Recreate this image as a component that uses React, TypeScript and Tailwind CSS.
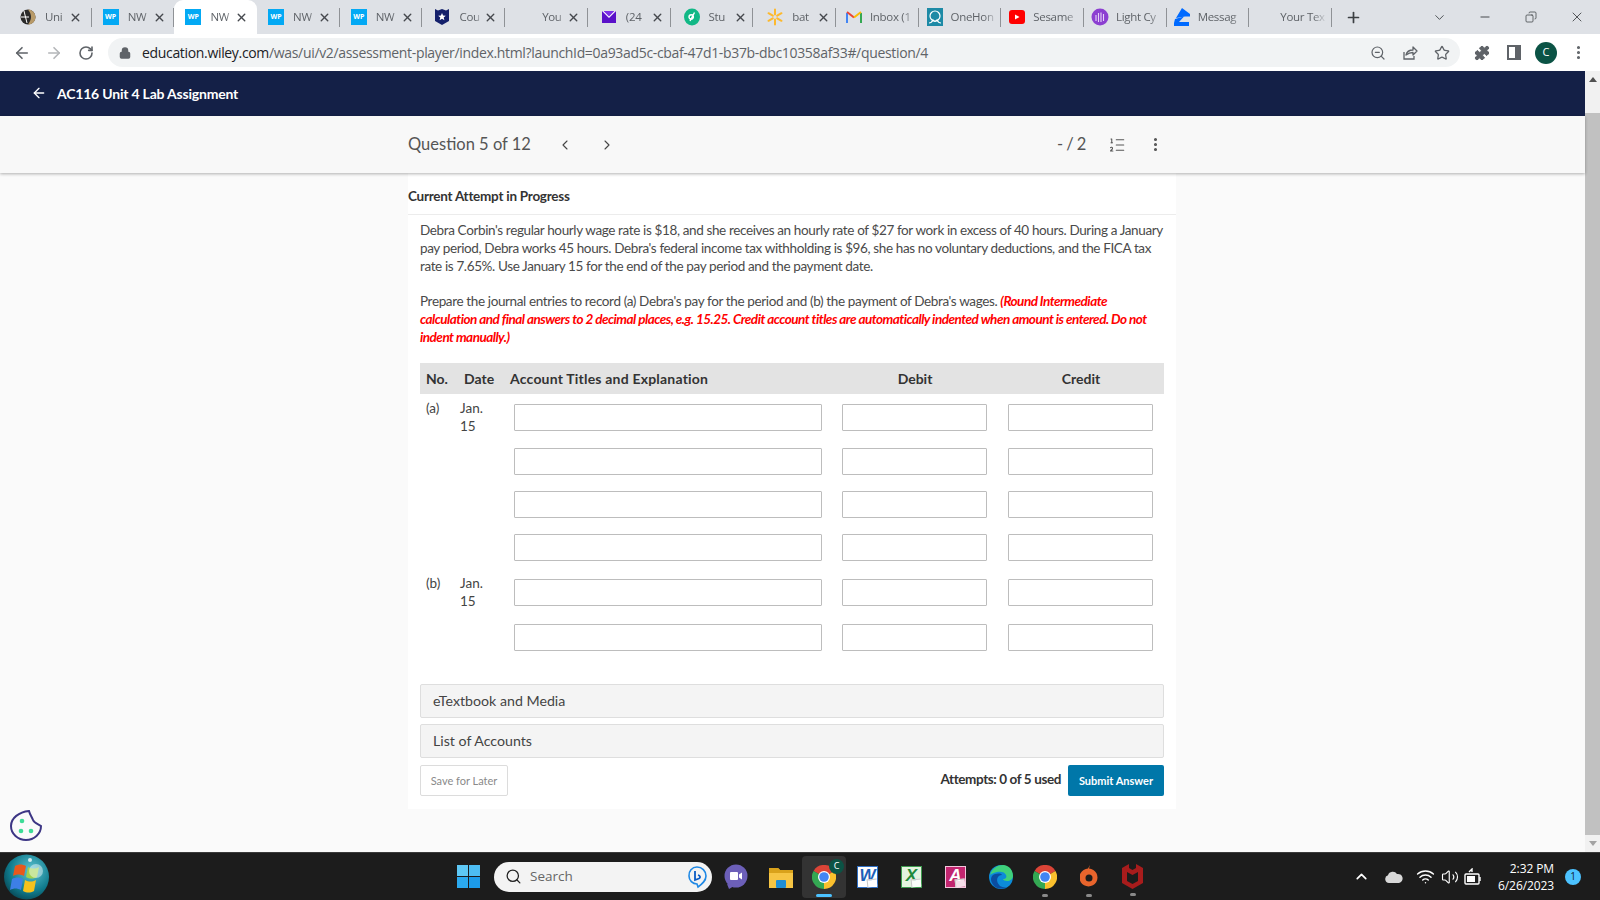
import {
  ArrowLeft, ArrowRight, RotateCw, Lock, ZoomOut, Star, Puzzle, MoreVertical,
  ChevronLeft, ChevronRight, ChevronDown, ChevronUp, ListOrdered, Search, Wifi, Volume2, Plus, Minus, X, Copy,
} from 'lucide-react'

const lato = { fontFamily: 'Lato, "Open Sans", sans-serif' }

function WpIcon() {
  return (
    <div className="w-[16px] h-[16px] bg-[#03a9f4] text-white flex items-center justify-center text-[7px] font-bold font-['Open_Sans',sans-serif]">
      WP
    </div>
  )
}

function WileyIcon() {
  return (
    <svg width="18" height="18" viewBox="0 0 18 18">
      <circle cx="9" cy="9" r="7.5" fill="#2a2a2a" />
      <path d="M9 1.5a7.5 7.5 0 0 1 7.5 7.5c0 4-3 7.5-7.5 7.5 2-3 3-5 3-7.5S11 4 9 1.5z" fill="#b89a68" />
      <path d="M2 9h8M5 3l3 12" stroke="#fff" strokeWidth="1" />
    </svg>
  )
}

function ShieldIcon() {
  return (
    <svg width="16" height="18" viewBox="0 0 16 18">
      <path d="M1 1l3 1.5 4-1.5 4 1.5 3-1.5v12l-7 4-7-4z" fill="#14206b" />
      <path d="M8 5l1.1 2.600 2.700.2-2.100 1.800.7 2.700L8 10.800 5.600 12.300l.7-2.700-2.100-1.800 2.700-.2z" fill="#fff" />
    </svg>
  )
}

function MailIcon() {
  return (
    <svg width="16" height="16" viewBox="0 0 16 16">
      <rect x="1" y="2" width="14" height="12" fill="#5a11c9" />
      <path d="M1 2h14L8 9z" fill="#fff" />
      <path d="M2.5 2h11L8 7.500z" fill="#7c2ee6" />
    </svg>
  )
}

function StudIcon() {
  return (
    <svg width="16" height="18" viewBox="0 0 16 18">
      <ellipse cx="8" cy="9" rx="8" ry="8.5" fill="#12b886" />
      <path d="M10.5 4.500L6 13M5 9a2.200 2.200 0 1 0 4.400 0 2.200 2.200 0 1 0-4.400 0" stroke="#fff" strokeWidth="1.400" fill="none" />
    </svg>
  )
}

function SparkIcon() {
  return (
    <svg width="18" height="18" viewBox="0 0 18 18" stroke="#fdb92d" strokeWidth="2" strokeLinecap="round">
      <path d="M9 1.5v5M9 11.500v5M2.500 5.200l4.300 2.500M11.200 10.300l4.300 2.500M2.500 12.800l4.300-2.500M11.200 7.700l4.300-2.500" />
    </svg>
  )
}

function GmailIcon() {
  return (
    <svg width="16" height="14" viewBox="0 0 16 14" fill="none">
      <path d="M1 13V3" stroke="#4285f4" strokeWidth="2" />
      <path d="M15 13V3" stroke="#34a853" strokeWidth="2" />
      <path d="M1 2l7 5.500" stroke="#ea4335" strokeWidth="2" />
      <path d="M8 7.500L15 2" stroke="#fbbc04" strokeWidth="2" />
    </svg>
  )
}

function OneHomeIcon() {
  return (
    <svg width="16" height="18" viewBox="0 0 16 18">
      <rect width="16" height="18" fill="#1d8aa6" />
      <circle cx="8" cy="8" r="5" fill="none" stroke="#fff" strokeWidth="1.200" />
      <path d="M2 15c2 0 3-1 4-3 1 2 3 2 4 0 1 2 2 3 4 3" fill="none" stroke="#fff" strokeWidth="1.200" />
    </svg>
  )
}

function YoutubeIcon() {
  return (
    <svg width="16" height="14" viewBox="0 0 16 14">
      <rect width="16" height="14" rx="3" fill="#f00" />
      <path d="M6 4.500l4.500 2.500L6 9.500z" fill="#fff" />
    </svg>
  )
}

function LightCycleIcon() {
  return (
    <svg width="18" height="18" viewBox="0 0 18 18" fill="none">
      <circle cx="9" cy="9" r="8.5" fill="#8c3fd1" />
      <path d="M5 13V7M7.500 14V5M10 14V4.500M12.500 13V6" stroke="#e6d3f7" strokeWidth="1.100" />
    </svg>
  )
}

function ZillowIcon() {
  return (
    <svg width="16" height="18" viewBox="0 0 16 18">
      <path d="M8 0l8 6v2.500H11L2 10 8 0z" fill="#006aff" />
      <path d="M1 11l9-2.500L5 14h10v4H0v-3z" fill="#006aff" />
    </svg>
  )
}

const tabs = [
  { icon: <WileyIcon />, label: 'Uni', close: 'left-[60px]', pad: 'pl-[10px]' },
  { icon: <WpIcon />, label: 'NW', close: 'left-[61px]', pad: 'pl-[10px]' },
  { icon: <WpIcon />, label: 'NW', close: 'left-[61px]', pad: 'pl-[10px]', active: true },
  { icon: <WpIcon />, label: 'NW', close: 'left-[61px]', pad: 'pl-[10px]' },
  { icon: <WpIcon />, label: 'NW', close: 'left-[61px]', pad: 'pl-[10px]' },
  { icon: <ShieldIcon />, label: 'Cou', close: 'left-[62px]', pad: 'pl-[11px]' },
  { icon: null, label: 'You', close: 'left-[62px]', pad: 'pl-[11px]' },
  { icon: <MailIcon />, label: '(24', close: 'left-[63px]', pad: 'pl-[12px]' },
  { icon: <StudIcon />, label: 'Stu', close: 'left-[63px]', pad: 'pl-[12px]' },
  { icon: <SparkIcon />, label: 'bat', close: 'left-[64px]', pad: 'pl-[13px]' },
  { icon: <GmailIcon />, label: 'Inbox (1', close: '', pad: 'pl-[9px]' },
  { icon: <OneHomeIcon />, label: 'OneHon', close: '', pad: 'pl-[7px]' },
  { icon: <YoutubeIcon />, label: 'Sesame', close: '', pad: 'pl-[7px]' },
  { icon: <LightCycleIcon />, label: 'Light Cy', close: '', pad: 'pl-[7px]' },
  { icon: <ZillowIcon />, label: 'Messag', close: '', pad: 'pl-[6px]' },
  { icon: null, label: 'Your Tex', close: '', pad: 'pl-[6px]' },
]

function Tab({ tab, last }: { tab: (typeof tabs)[number]; last: boolean }) {
  return (
    <div className={`relative w-[82.7px] h-[34px] shrink-0 flex items-center ${tab.pad} ${tab.active ? 'bg-white rounded-t-[9px]' : ''}`}>
      <div className="w-[18px] h-[18px] flex items-center justify-center shrink-0">{tab.icon}</div>
      <span className={`${tab.close ? 'ml-[8px] w-[23px]' : 'ml-[7px] w-[47px]'} overflow-hidden whitespace-nowrap text-[11.5px] text-[#5f6368] font-['Open_Sans',sans-serif] tracking-[-0.3px] [mask-image:linear-gradient(to_right,black_70%,transparent)]`}>
        {tab.label}
      </span>
      {tab.close && <X size={13} strokeWidth={2.6} className={`absolute ${tab.close} top-[11px] text-[#45484d]`} />}
      {(last || !tab.active) && <div className="absolute right-0 top-[8px] w-px h-[19px] bg-[#8f9296]" />}
    </div>
  )
}

function TabStrip() {
  return (
    <div className="h-[34px] bg-[#dee1e6] flex items-center pl-[9px] text-[#3c4043]">
      {tabs.map((t, i) => (
        <Tab key={i} tab={t} last={i === tabs.length - 1} />
      ))}
      <Plus size={17} strokeWidth={2.4} className="ml-[13px] text-[#3c4043]" />
      <ChevronDown size={15} strokeWidth={1.4} className="ml-[70px]" />
      <Minus size={14} strokeWidth={1.6} className="ml-[31px]" />
      <Copy size={12} strokeWidth={1.5} className="ml-[33px] -scale-x-100" />
      <X size={16} strokeWidth={1.3} className="ml-[32px]" />
    </div>
  )
}

function ShareIcon() {
  return (
    <svg width="16" height="16" viewBox="0 0 16 16" fill="none" stroke="#5f6368" strokeWidth="1.3" className="ml-[16px] shrink-0">
      <path d="M2 7v7h10v-3" />
      <path d="M4 10c1-4 4-5 7-5V2l4 4-4 4V7.500c-3 0-5 1-7 2.500z" strokeLinejoin="round" />
    </svg>
  )
}

function Toolbar() {
  return (
    <div className="h-[37px] bg-white flex items-center text-[#5f6368]">
      <ArrowLeft size={18} strokeWidth={2.2} className="ml-[13px]" />
      <ArrowRight size={18} strokeWidth={2.2} className="ml-[14px] text-[#b4b6b9]" />
      <RotateCw size={16} strokeWidth={2.4} className="ml-[15px]" />
      <div className="ml-[14px] w-[1352px] h-[29px] rounded-full bg-[#f1f3f4] flex items-center pl-[11px] pr-[10px]">
        <Lock size={12} strokeWidth={3} fill="#5f6368" />
        <span className="ml-[11px] pb-[1px] text-[14px] text-[#5f6368] font-['Open_Sans',sans-serif] tracking-[-0.33px] whitespace-nowrap flex-1">
          <span className="text-[#202124]">education.wiley.com</span>/was/ui/v2/assessment-player/index.html?launchId=0a93ad5c-cbaf-47d1-b37b-dbc10358af33#/question/4
        </span>
        <ZoomOut size={16} strokeWidth={1.8} />
        <ShareIcon />
        <Star size={16} strokeWidth={1.9} className="ml-[16px]" />
      </div>
      <Puzzle size={16} fill="#5f6368" strokeWidth={1.5} className="ml-[14px]" />
      <div className="ml-[17px] w-[14px] h-[15px] border-[2px] border-[#5f6368] border-r-[6px]" />
      <div className="ml-[14px] w-[22px] h-[22px] rounded-full bg-[#0b5345] text-white text-[11px] flex items-center justify-center font-['Open_Sans',sans-serif]">
        C
      </div>
      <MoreVertical size={17} strokeWidth={2.4} className="ml-[13px]" />
    </div>
  )
}

function QuestionHeader() {
  return (
    <div className="h-[57px] bg-[#f8f8f8] shadow-[0_1px_3px_rgba(0,0,0,0.3)] relative z-10 flex items-center pl-[408px] text-[#555]" style={lato}>
      <span className="text-[16.5px] w-[149px] whitespace-nowrap">Question 5 of 12</span>
      <ChevronLeft size={16} strokeWidth={1.6} className="text-[#444]" />
      <ChevronRight size={16} strokeWidth={1.6} className="ml-[26px] text-[#444]" />
      <span className="ml-[442px] text-[16.5px] w-[51px] whitespace-nowrap tracking-[-0.6px]">- / 2</span>
      <ListOrdered size={18} strokeWidth={1.4} />
      <MoreVertical size={17} strokeWidth={2.4} className="ml-[21px]" />
    </div>
  )
}

const rows = [
  { no: '(a)', date: true, h: 'h-[44px]' },
  { no: '', date: false, h: 'h-[43px]' },
  { no: '', date: false, h: 'h-[43px]' },
  { no: '', date: false, h: 'h-[45px]' },
  { no: '(b)', date: true, h: 'h-[45px]' },
  { no: '', date: false, h: 'h-[44px]' },
]

function Field({ w, ml }: { w: string; ml: string }) {
  return <div className={`${w} ${ml} h-[27px] border border-[#bdbdbd] rounded-[1px] bg-white shrink-0`} />
}

function JournalTable() {
  return (
    <div>
      <div className="h-[31px] bg-[#e3e3e3] flex items-center pb-[1px] text-[14px] font-bold text-[#333] whitespace-nowrap">
        <span className="ml-[6px] w-[38px]">No.</span>
        <span className="w-[46px]">Date</span>
        <span className="w-[284px] tracking-[0.2px]">Account Titles and Explanation</span>
        <span className="w-[242px] text-center">Debit</span>
        <span className="w-[90px] text-center">Credit</span>
      </div>
      <div className="pt-[10px]">
        {rows.map((r, i) => (
          <div key={i} className={`flex ${r.h} text-[13.5px] leading-[18px] text-[#444]`}>
            <span className="ml-[6px] w-[34px] shrink-0 -mt-[5px]">{r.no}</span>
            <span className="w-[54px] shrink-0 -mt-[5px]">
              {r.date && (
                <>
                  Jan.
                  <br />
                  15
                </>
              )}
            </span>
            <Field w="w-[308px]" ml="" />
            <Field w="w-[145px]" ml="ml-[20px]" />
            <Field w="w-[145px]" ml="ml-[21px]" />
          </div>
        ))}
      </div>
    </div>
  )
}

function Accordion({ label, mt }: { label: string; mt: string }) {
  return (
    <div className={`h-[34px] ${mt} rounded-[2px] border border-[#dedede] bg-[#f4f4f4] flex items-center pl-[12px] text-[14.2px] text-[#444]`}>
      {label}
    </div>
  )
}

function Panel() {
  return (
    <div className="ml-[408px] w-[768px] bg-white h-[636px]" style={lato}>
      <div className="h-[42px] border-b border-[#ececec] flex items-center text-[13.5px] font-bold text-[#333] tracking-[-0.25px] pt-[5px]">
        Current Attempt in Progress
      </div>
      <div className="px-[12px] pt-[6px] text-[13.5px] leading-[18px] text-[#4a4a4a] tracking-[-0.37px]">
        <p>
          Debra Corbin's regular hourly wage rate is $18, and she receives an hourly rate of $27 for work in excess of 40 hours. During a January pay period, Debra works 45 hours. Debra's federal income tax withholding is $96, she has no voluntary deductions, and the FICA tax rate is 7.65%. Use January 15 for the end of the pay period and the payment date.
        </p>
        <p className="mt-[17px]">
          Prepare the journal entries to record (a) Debra's pay for the period and (b) the payment of Debra's wages.{' '}
          <em className="text-[#f00] font-bold tracking-[-0.52px]">
            (Round Intermediate calculation and final answers to 2 decimal places, e.g. 15.25. Credit account titles are automatically indented when amount is entered. Do not indent manually.)
          </em>
        </p>
      </div>
      <div className="px-[12px] mt-[17px]">
        <JournalTable />
        <Accordion label="eTextbook and Media" mt="mt-[16px]" />
        <Accordion label="List of Accounts" mt="mt-[6px]" />
        <div className="mt-[7px] flex items-center">
          <button className="h-[31px] w-[88px] pt-[1px] border border-[#dcdcdc] rounded-[2px] text-[11px] text-[#8a8a8a] bg-white">Save for Later</button>
          <span className="ml-auto mr-[7px] text-[13.5px] font-bold text-[#333] tracking-[-0.4px] -mt-[3px]">Attempts: 0 of 5 used</span>
          <button className="h-[31px] w-[96px] pt-[1px] rounded-[2px] bg-[#0077a9] text-white text-[11px] font-bold">Submit Answer</button>
        </div>
      </div>
    </div>
  )
}

function CookieIcon() {
  return (
    <svg width="33" height="33" viewBox="0 0 33 33" fill="none">
      <path d="M20 2C21 6 23 8 24 11C25 14 29 15 32 17C32 25 25 31 17 31C9 31 2 25 2 17C2 9 10 3 20 2z" stroke="#3c3584" strokeWidth="2" />
      <circle cx="13" cy="12" r="2.3" fill="#3ddc97" />
      <circle cx="12" cy="22" r="2.3" fill="#3ddc97" />
      <circle cx="22" cy="22" r="2.3" fill="#3ddc97" />
    </svg>
  )
}

function Orb() {
  return (
    <svg width="45" height="46" viewBox="0 0 45 46">
      <defs>
        <radialGradient id="orb" cx="0.6" cy="0.35" r="0.8">
          <stop offset="0" stopColor="#5ec4d2" />
          <stop offset="0.6" stopColor="#0f7a8c" />
          <stop offset="1" stopColor="#06333f" />
        </radialGradient>
      </defs>
      <ellipse cx="22.5" cy="23" rx="22.5" ry="22.5" fill="url(#orb)" />
      <path d="M11 12c4-2 7-2 11 0l-2 10c-4-2-7-2-11 0z" fill="#e8581c" />
      <path d="M24 13c4 2 7 2 11 0l-2 10c-4 2-7 2-11 0z" fill="#9fd14f" />
      <path d="M8 25c4-2 7-2 11 0l-2 11c-4-2-7-2-11 0z" fill="#3d7fe6" />
      <path d="M21 26c4 2 7 2 11 0l-2 11c-4 2-7 2-11 0z" fill="#f6c21c" />
      <circle cx="32" cy="17" r="7" fill="#fff" opacity="0.45" />
      <circle cx="26" cy="6" r="2" fill="#fff" opacity="0.8" />
    </svg>
  )
}

function ChromeIcon({ size }: { size: number }) {
  return (
    <svg width={size} height={size} viewBox="2 2 20 20">
      <path d="M12 12L3.300 7A10 10 0 0 1 20.700 7z" fill="#db4437" />
      <path d="M12 12l8.700-5A10 10 0 0 1 12 22z" fill="#fbc02d" />
      <path d="M12 12v10A10 10 0 0 1 3.300 7z" fill="#34a853" />
      <circle cx="12" cy="12" r="5" fill="#fff" />
      <circle cx="12" cy="12" r="4" fill="#4285f4" />
    </svg>
  )
}

function OfficeIcon({ letter, color, bg, edge }: { letter: string; color: string; bg: string; edge: string }) {
  return (
    <div className={`relative w-[21px] h-[22px] ${bg} border ${edge} flex items-start justify-center shrink-0`}>
      <span className={`text-[17px] leading-[18px] font-bold font-['Liberation_Sans',sans-serif] italic ${color}`}>{letter}</span>
      <div className="absolute right-0 bottom-0 w-[10px] h-[8px] bg-white/85 border-t border-l border-[#c8c8c8] -rotate-6" />
    </div>
  )
}

function Dot({ top }: { top: string }) {
  return <div className={`absolute left-1/2 -translate-x-1/2 ${top} w-[6px] h-[3px] rounded-full bg-[#8a8a8a]`} />
}

function Taskbar() {
  return (
    <div className="h-[48px] bg-[#1c1c1c] border-t border-[#3a3a3a] flex items-center text-white">
      <div className="ml-[4px] w-[45px] shrink-0">
        <Orb />
      </div>
      <div className="ml-[408px] w-[23px] h-[23px] grid grid-cols-2 grid-rows-2 gap-[1px] shrink-0">
        <div className="bg-[#5ec8f5]" />
        <div className="bg-[#4dbdf3]" />
        <div className="bg-[#2ba9ef]" />
        <div className="bg-[#1c9bea]" />
      </div>
      <div className="ml-[14px] w-[218px] h-[30px] rounded-full bg-[#f3f3f3] flex items-center pl-[11px] pr-[4px] shrink-0">
        <Search size={17} strokeWidth={1.8} className="text-[#222]" />
        <span className="ml-[8px] text-[13.5px] text-[#666] font-['Open_Sans',sans-serif]">Search</span>
        <svg width="21" height="24" viewBox="0 0 21 24" fill="none" className="ml-auto">
          <path d="M10 2a9 9 0 0 1 9 9c0 5-4 8-8 11l-1-3A8 8 0 0 1 2 11a8 8 0 0 1 8-9z" stroke="#1e88e5" strokeWidth="1.6" />
          <path d="M8 6v9l4-1.500c2-1 1-3-1-3.500" stroke="#0a5bc4" strokeWidth="1.8" />
        </svg>
      </div>
      <svg width="24" height="26" viewBox="0 0 24 26" className="ml-[12px] shrink-0">
        <ellipse cx="12" cy="12" rx="11.5" ry="11.5" fill="#6c5fb8" />
        <path d="M3 20l2 5 5-3z" fill="#6c5fb8" />
        <rect x="6" y="8" width="8" height="8" rx="1" fill="#fff" />
        <path d="M15 10.500l3-2v7l-3-2z" fill="#fff" />
      </svg>
      <svg width="24" height="22" viewBox="0 0 24 22" className="ml-[21px] shrink-0">
        <path d="M0 2h9l2 2h13v18H0z" fill="#f6c544" />
        <path d="M0 2h9l2 2h13v3H0z" fill="#d9a21b" />
        <rect x="7" y="14" width="10" height="8" rx="1" fill="#1e8ed6" />
      </svg>
      <div className="relative ml-[9px] w-[44px] h-[42px] bg-[#333] rounded-[4px] flex items-center justify-center shrink-0">
        <ChromeIcon size={24} />
        <div className="absolute right-[2px] top-[3px] w-[15px] h-[15px] rounded-full bg-[#0b5345] text-[9px] flex items-center justify-center">C</div>
        <div className="absolute left-1/2 -translate-x-1/2 bottom-[1px] w-[16px] h-[3px] rounded-full bg-[#4cc2ff]" />
      </div>
      <div className="ml-[11px]">
        <OfficeIcon letter="W" color="text-[#1d5fb8]" bg="bg-white" edge="border-[#2f6fc4]" />
      </div>
      <div className="ml-[23px]">
        <OfficeIcon letter="X" color="text-[#1f8a3b]" bg="bg-[#e4f3df]" edge="border-[#3d9a4e]" />
      </div>
      <div className="ml-[23px]">
        <OfficeIcon letter="A" color="text-white" bg="bg-[#c2256f]" edge="border-[#f3c6dc]" />
      </div>
      <svg width="24" height="24" viewBox="0 0 24 24" className="ml-[23px] shrink-0">
        <circle cx="12" cy="12" r="12" fill="#0c8bd9" />
        <path d="M1 10C3 3 9 0 14 0c6 0 10 5 10 11 0 3-3 5-6 5-2 0-4-1-4-2 3 0 4-2 3-4-1-3-5-4-9-3-4 1-6 2-7 3z" fill="#3fd07b" />
        <path d="M6 22c-4-4-5-8-3-11 3-3 9-3 10-1-5 0-7 6-2 11 2 1 5 2 7 1-3 2-8 2-12 0z" fill="#0b4da0" />
      </svg>
      <div className="relative ml-[20px] shrink-0 h-[24px]">
        <ChromeIcon size={24} />
        <Dot top="top-[29px]" />
      </div>
      <div className="relative ml-[23px] shrink-0 w-[18px] h-[24px]">
        <svg width="18" height="24" viewBox="0 0 18 24">
          <path d="M10 0l-1 3.500a9 9 0 1 1-1 0z" fill="#e8642c" />
          <circle cx="9" cy="13" r="3.5" fill="#1c1c1c" />
        </svg>
        <Dot top="top-[29px]" />
      </div>
      <div className="relative ml-[24px] shrink-0 w-[21px] h-[25px]">
        <svg width="21" height="25" viewBox="0 0 21 25">
          <path d="M0 4l7-4v4l3.500 2L14 4V0l7 4v15l-10.500 6L0 19z" fill="#a81c1c" />
          <path d="M5 8l5.500 3L16 8v9l-5.500 3L5 17z" fill="#1c1c1c" />
        </svg>
        <Dot top="top-[29px]" />
      </div>
      <ChevronUp size={17} strokeWidth={2.4} className="ml-[210px]" />
      <svg width="18" height="12" viewBox="0 0 18 12" className="ml-[15px] shrink-0">
        <path d="M4 12a4 4 0 0 1-1-7.800A5 5 0 0 1 12 3a4.500 4.500 0 0 1 2 9z" fill="#d8d8d8" />
      </svg>
      <Wifi size={19} strokeWidth={1.8} className="ml-[13px]" />
      <Volume2 size={18} strokeWidth={1.5} className="ml-[6px]" />
      <svg width="18" height="18" viewBox="0 0 18 18" fill="none" stroke="#fff" strokeWidth="1.4" className="ml-[5px] shrink-0">
        <rect x="1" y="6" width="14" height="10" rx="1" />
        <rect x="3" y="8" width="8" height="6" fill="#fff" stroke="none" />
        <path d="M16 9v4M5 4l3-3v3" />
      </svg>
      <div className="ml-auto mr-[11px] text-right text-[12px] leading-[17px] font-['Open_Sans',sans-serif] tracking-[-0.1px]">
        <div>2:32 PM</div>
        <div>6/26/2023</div>
      </div>
      <div className="mr-[19px] w-[16px] h-[16px] rounded-full bg-[#4cc2ff] text-[#123] text-[10px] flex items-center justify-center font-['Open_Sans',sans-serif]">1</div>
    </div>
  )
}

function Scrollbar() {
  return (
    <div className="w-[15px] bg-[#f1f1f1] flex flex-col items-center shrink-0">
      <div className="h-[17px] flex items-center justify-center">
        <div className="w-0 h-0 border-x-[4px] border-x-transparent border-b-[5px] border-b-[#505050]" />
      </div>
      <div className="mt-[25px] w-full h-[723px] bg-[#c1c1c1]" />
      <div className="mt-auto h-[17px] flex items-center justify-center">
        <div className="w-0 h-0 border-x-[4px] border-x-transparent border-t-[5px] border-t-[#a3a3a3]" />
      </div>
    </div>
  )
}

export default function App() {
  return (
    <div className="w-[1600px] h-[900px] overflow-hidden flex flex-col bg-[#fafafa]">
      <TabStrip />
      <Toolbar />
      <div className="flex flex-1 min-h-0">
        <div className="flex-1 flex flex-col min-w-0">
          <div className="h-[45px] bg-[#142047] flex items-center text-white pb-[1px]" style={lato}>
            <ArrowLeft size={16} strokeWidth={2} className="ml-[31px]" />
            <span className="ml-[10px] text-[14px] font-bold tracking-[-0.2px]">AC116 Unit 4 Lab Assignment</span>
          </div>
          <QuestionHeader />
          <div className="relative flex-1 bg-[#fafafa]">
            <Panel />
            <div className="absolute left-[9px] bottom-[10px]">
              <CookieIcon />
            </div>
          </div>
        </div>
        <Scrollbar />
      </div>
      <Taskbar />
    </div>
  )
}
